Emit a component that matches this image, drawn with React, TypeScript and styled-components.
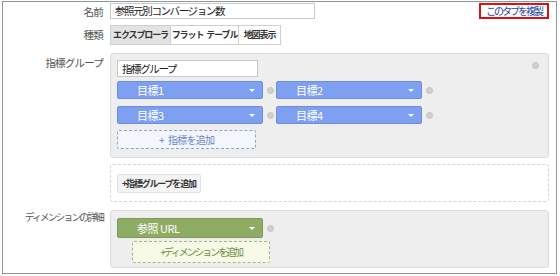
import React from "react";
import styled, { createGlobalStyle } from "styled-components";

const GlobalStyle = createGlobalStyle`
  html, body {
    margin: 0;
    padding: 0;
    background: #fff;
  }
  body {
    font-family: "Noto Sans CJK JP", "Noto Sans", sans-serif;
    font-size: 11px;
    color: #333;
  }
`;

const Frame = styled.div`
  box-sizing: border-box;
  width: 555px;
  height: 273px;
  margin: 1px 0 0 2px;
  border: 1px solid #8c969b;
  padding: 1px 7px 0 0;
  display: grid;
  grid-template-columns: 100px 1fr;
  column-gap: 7px;
  align-content: start;
`;

const Label = styled.div<{ $top?: number; $ls?: number; $size?: number }>`
  text-align: right;
  color: #555;
  font-size: ${(p) => p.$size ?? 10.5}px;
  letter-spacing: ${(p) => p.$ls ?? -0.8}px;
  line-height: 14px;
  white-space: nowrap;
  padding-top: ${(p) => p.$top ?? 0}px;
`;

const Cell = styled.div<{ $mb?: number }>`
  margin-bottom: ${(p) => p.$mb ?? 0}px;
  min-width: 0;
`;

const NameRow = styled.div`
  display: flex;
  align-items: center;
  justify-content: space-between;
`;

const TextBox = styled.div<{ $w: number; $h: number }>`
  box-sizing: border-box;
  width: ${(p) => p.$w}px;
  height: ${(p) => p.$h}px;
  border: 1px solid #c8c8c8;
  background: #fff;
  padding: 0 4px;
  font-size: 10.5px;
  letter-spacing: -1.4px;
  line-height: ${(p) => p.$h - 2}px;
  color: #222;
  white-space: nowrap;
`;

const CopyLink = styled.span`
  box-sizing: border-box;
  height: 16px;
  border: 2px solid #d11;
  padding: 0 5px;
  font-size: 10px;
  letter-spacing: -2px;
  line-height: 12px;
  color: #2443a0;
  white-space: nowrap;
`;

const Segmented = styled.div`
  display: inline-flex;
  height: 20px;
`;

const SegButton = styled.div<{ $active?: boolean; $w: number }>`
  box-sizing: border-box;
  width: ${(p) => p.$w}px;
  border: 1px solid #cfcfcf;
  margin-left: -1px;
  &:first-child {
    margin-left: 0;
  }
  background: ${(p) => (p.$active ? "#e3e3e3" : "#fff")};
  font-size: 9px;
  font-weight: bold;
  letter-spacing: -1.1px;
  word-spacing: 2px;
  line-height: 18px;
  text-align: center;
  color: #333;
  white-space: nowrap;
`;

const Panel = styled.div<{ $pt: number; $pb: number }>`
  position: relative;
  box-sizing: border-box;
  background: #eeeeee;
  border: 1px solid #dcdcdc;
  border-radius: 3px;
  padding: ${(p) => p.$pt}px 7px ${(p) => p.$pb}px 6px;
`;

const DashedPanel = styled.div`
  box-sizing: border-box;
  height: 38px;
  border: 1px dashed #d4d4d4;
  border-radius: 3px;
  padding: 9px 6px;
`;

const Dot = styled.span`
  display: inline-block;
  width: 7px;
  height: 7px;
  border-radius: 50%;
  background: #d0d0d0;
  border: 1px solid #c2c2c2;
  box-sizing: border-box;
`;

const PanelClose = styled(Dot)`
  position: absolute;
  top: 8px;
  right: 9px;
`;

const ChipGrid = styled.div`
  display: grid;
  grid-template-columns: repeat(2, auto);
  justify-content: start;
  column-gap: 2px;
  row-gap: 7px;
  margin-top: 4px;
`;

const ChipWrap = styled.div`
  display: flex;
  align-items: center;
  gap: 4px;
`;

const Chip = styled.div<{ $green?: boolean; $h: number }>`
  box-sizing: border-box;
  width: 146px;
  height: ${(p) => p.$h}px;
  border-radius: 2px;
  background: ${(p) => (p.$green ? "#8fac64" : "#7f9ff0")};
  border: 1px solid ${(p) => (p.$green ? "#7d9953" : "#6d8de0")};
  display: flex;
  align-items: center;
  padding: 0 7px 0 4px;
  color: #fff;
  font-size: 11px;
  letter-spacing: -0.5px;
`;

const Handle = styled.span`
  width: 3px;
  height: 10px;
  background-image: radial-gradient(rgba(255, 255, 255, 0.75) 0.6px, transparent 0.7px);
  background-size: 2px 2px;
  margin-right: 12px;
  flex: none;
`;

const ChipText = styled.span`
  flex: 1;
  white-space: nowrap;
`;

const Caret = styled.span`
  width: 0;
  height: 0;
  border-left: 3px solid transparent;
  border-right: 3px solid transparent;
  border-top: 3px solid #fff;
`;

const AddButton = styled.div<{ $green?: boolean; $w: number; $h: number; $ml?: number; $mt: number }>`
  box-sizing: border-box;
  width: ${(p) => p.$w}px;
  height: ${(p) => p.$h}px;
  margin: ${(p) => p.$mt}px 0 0 ${(p) => p.$ml ?? 0}px;
  border: 1px dashed ${(p) => (p.$green ? "#a8b884" : "#8ea3cf")};
  border-radius: 2px;
  background: ${(p) => (p.$green ? "#f6fae6" : "#f3f6fd")};
  color: ${(p) => (p.$green ? "#6d8a3c" : "#6a82c6")};
  font-size: 10px;
  letter-spacing: ${(p) => (p.$green ? -2.1 : -0.8)}px;
  word-spacing: 3px;
  line-height: ${(p) => p.$h - 2}px;
  text-align: center;
  white-space: nowrap;
`;

const PlainButton = styled.div`
  display: inline-block;
  box-sizing: border-box;
  height: 19px;
  padding: 0 4px;
  border: 1px solid #e2e2e2;
  border-radius: 2px;
  background: #f4f4f4;
  font-size: 9px;
  font-weight: bold;
  letter-spacing: -1.2px;
  line-height: 17px;
  color: #333;
  white-space: nowrap;
`;

const metrics = ["目標1", "目標2", "目標3", "目標4"];

const App = (): JSX.Element => {
  return (
    <>
      <GlobalStyle />
      <Frame>
        <Label $top={2}>名前</Label>
        <Cell $mb={6}>
          <NameRow>
            <TextBox $w={205} $h={16}>参照元別コンバージョン数</TextBox>
            <CopyLink>このタブを複製</CopyLink>
          </NameRow>
        </Cell>

        <Label $top={3}>種類</Label>
        <Cell $mb={8}>
          <Segmented>
            <SegButton $active $w={61}>エクスプローラ</SegButton>
            <SegButton $w={69}>フラット テーブル</SegButton>
            <SegButton $w={43}>地図表示</SegButton>
          </Segmented>
        </Cell>

        <Label $top={3}>指標グループ</Label>
        <Cell $mb={6}>
          <Panel $pt={6} $pb={8}>
            <PanelClose />
            <TextBox $w={141} $h={17}>指標グループ</TextBox>
            <ChipGrid>
              {metrics.map((m) => (
                <ChipWrap key={m}>
                  <Chip $h={18}>
                    <Handle />
                    <ChipText>{m}</ChipText>
                    <Caret />
                  </Chip>
                  <Dot />
                </ChipWrap>
              ))}
            </ChipGrid>
            <AddButton $w={139} $h={19} $mt={6}>+ 指標を追加</AddButton>
          </Panel>
        </Cell>

        <div />
        <Cell $mb={8}>
          <DashedPanel>
            <PlainButton>+指標グループを追加</PlainButton>
          </DashedPanel>
        </Cell>

        <Label $top={0} $ls={-1.9} $size={9.8}>ディメンションの詳細</Label>
        <Cell>
          <Panel $pt={7} $pb={4}>
            <ChipWrap>
              <Chip $green $h={20}>
                <Handle />
                <ChipText>参照 URL</ChipText>
                <Caret />
              </Chip>
              <Dot />
            </ChipWrap>
            <AddButton $green $w={138} $h={22} $ml={15} $mt={3}>
              +ディメンションを追加
            </AddButton>
          </Panel>
        </Cell>
      </Frame>
    </>
  );
};

export default App;
